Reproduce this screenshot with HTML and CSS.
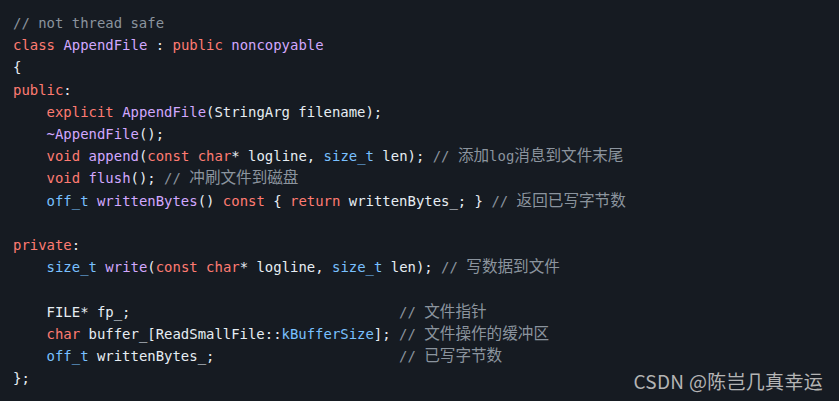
FILE: index.html
```html
<!DOCTYPE html>
<html lang="zh">
<head>
<meta charset="utf-8">
<link rel="stylesheet" href="styles.css">
</head>
<body>
<div class="block">
<pre class="code"><span class="cm">// not thread safe</span>
<span class="kw">class</span> <span class="ti">AppendFile</span> : <span class="kw">public</span> <span class="ti">noncopyable</span>
{
<span class="kw">public</span>:
    <span class="kw">explicit</span> <span class="ti">AppendFile</span>(StringArg filename);
    <span class="ti">~AppendFile</span>();
    <span class="kw">void</span> <span class="ti">append</span>(<span class="kw">const</span> <span class="kw">char</span>* logline, <span class="ty">size_t</span> len); <span class="cm">// <span class="zh">添加</span>log<span class="zh">消息到文件末尾</span></span>
    <span class="kw">void</span> <span class="ti">flush</span>(); <span class="cm">// <span class="zh">冲刷文件到磁盘</span></span>
    <span class="ty">off_t</span> <span class="ti">writtenBytes</span>() <span class="kw">const</span> { <span class="kw">return</span> writtenBytes_; } <span class="cm">// <span class="zh">返回已写字节数</span></span>

<span class="kw">private</span>:
    <span class="ty">size_t</span> <span class="ti">write</span>(<span class="kw">const</span> <span class="kw">char</span>* logline, <span class="ty">size_t</span> len); <span class="cm">// <span class="zh">写数据到文件</span></span>

    FILE* fp_;                                <span class="cm">// <span class="zh">文件指针</span></span>
    <span class="kw">char</span> buffer_[ReadSmallFile::<span class="ty">kBufferSize</span>]; <span class="cm">// <span class="zh">文件操作的缓冲区</span></span>
    <span class="ty">off_t</span> writtenBytes_;                      <span class="cm">// <span class="zh">已写字节数</span></span>
};</pre>
<div class="mark">CSDN @陈岂几真幸运</div>
</div>
</body>
</html>
```

FILE: styles.css
```css
html, body {
  margin: 0;
  padding: 0;
  background: #161b22;
}
.block {
  position: relative;
  width: 839px;
  height: 401px;
  background: #161b22;
  overflow: hidden;
}
.code {
  margin: 0;
  padding: 12px 13px;
  font-family: "DejaVu Sans Mono", "Liberation Mono", "Noto Sans CJK SC", monospace;
  font-size: 13.95px;
  line-height: 22.2px;
  color: #e6edf3;
  white-space: pre;
}
.kw { color: #ff7b72; }
.ti { color: #d2a8ff; }
.ty { color: #79c0ff; }
.cm { color: #8b949e; }
.zh {
  font-family: "Noto Sans CJK SC", sans-serif;
  font-size: 15.6px;
  line-height: 14px;
}
.mark {
  position: absolute;
  right: 16px;
  bottom: 7px;
  font-family: "Noto Sans CJK SC", sans-serif;
  font-size: 19px;
  line-height: 26px;
  color: #b4b4b4;
  letter-spacing: 0.3px;
}
```
